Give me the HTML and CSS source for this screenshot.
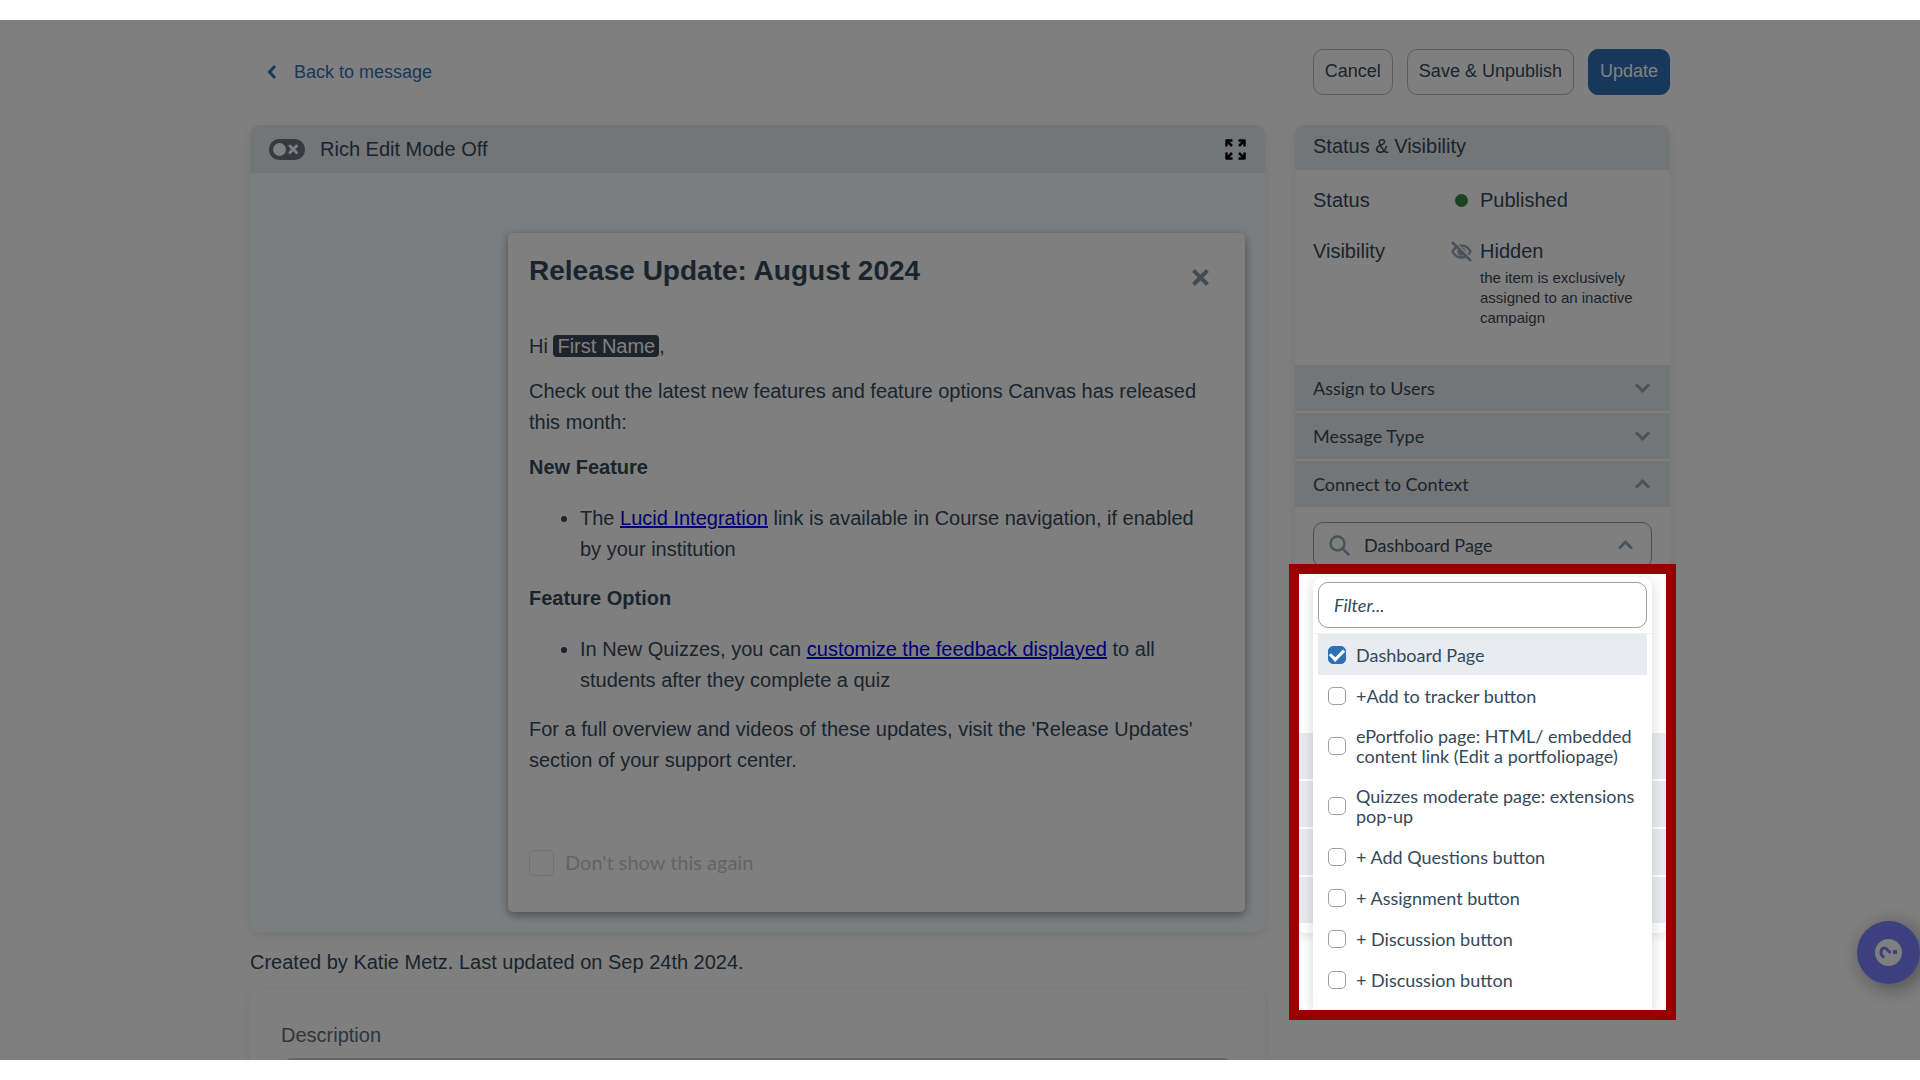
FILE: index.html
```html
<!DOCTYPE html>
<html lang="en">
<head>
  <meta charset="utf-8">
  <meta name="viewport" content="width=device-width, initial-scale=1">
  <title>Edit message</title>
  <link rel="stylesheet" href="styles.css">
</head>
<body>
  <div class="frame">
    <div class="page">
      <header class="topbar">
        <a class="back" href="#">
          <svg class="back-icon" viewBox="0 0 10 16" aria-hidden="true"><path d="M8 2 2.500 8 8 14"/></svg>
          Back to message
        </a>
        <div class="actions">
          <button class="btn" type="button">Cancel</button>
          <button class="btn" type="button">Save &amp; Unpublish</button>
          <button class="btn btn-primary" type="button">Update</button>
        </div>
      </header>

      <div class="columns">
        <main class="main">
          <section class="panel editor">
            <div class="editor-head">
              <label class="mode">
                <input class="toggle" type="checkbox" role="switch">
                <svg class="toggle-art" viewBox="0 0 36 21" aria-hidden="true">
                  <rect width="36" height="21" rx="10" fill="#6b7780"/>
                  <circle cx="10.500" cy="10.500" r="6.500" fill="#fff"/>
                  <path d="m21 7 6.500 6.500M27.500 7 21 13.500" stroke="#fff" stroke-width="3" stroke-linecap="round"/>
                </svg>
                Rich Edit Mode Off
              </label>
              <button class="icon-btn" type="button" aria-label="Full screen">
                <svg width="21" height="21" viewBox="0 0 21 21" fill="none" stroke="#000" stroke-width="2.500" stroke-linejoin="round" aria-hidden="true">
                  <path d="M1.500 7.500v-6h6M13.500 1.500h6v6M19.500 13.500v6h-6M7.500 19.500h-6v-6"/>
                  <path d="m2 2 5 5M19 2l-5 5M19 19l-5-5M2 19l5-5"/>
                </svg>
              </button>
            </div>
            <div class="editor-body">
              <article class="card">
                <div class="card-head">
                  <h1 class="card-title">Release Update: August 2024</h1>
                  <button class="icon-btn card-close" type="button" aria-label="Close">
                    <svg width="17" height="17" viewBox="0 0 17 17" aria-hidden="true"><path d="m1.500 1.500 14 14M15.500 1.500l-14 14" stroke="#8b969e" stroke-width="4"/></svg>
                  </button>
                </div>
                <p>Hi <span class="token">First Name</span>,</p>
                <p>Check out the latest new features and feature options Canvas has released this month:</p>
                <p><strong>New Feature</strong></p>
                <ul>
                  <li>The <a class="link" href="#">Lucid Integration</a> link is available in Course navigation, if enabled by your institution</li>
                </ul>
                <p><strong>Feature Option</strong></p>
                <ul>
                  <li>In New Quizzes, you can <a class="link" href="#">customize the feedback displayed</a> to all students after they complete a quiz</li>
                </ul>
                <p>For a full overview and videos of these updates, visit the 'Release Updates' section of your support center.</p>
                <label class="dismiss"><input class="check check-lg" type="checkbox" disabled>Don't show this again</label>
              </article>
            </div>
          </section>
          <p class="meta">Created by Katie Metz. Last updated on Sep 24th 2024.</p>
          <section class="panel details">
            <label class="field-label" for="description">Description</label>
            <textarea class="field" id="description"></textarea>
          </section>
        </main>

        <aside class="panel sidebar">
          <h2 class="side-head">Status &amp; Visibility</h2>
          <dl class="status">
            <dt>Status</dt>
            <dd class="status-value"><span class="status-mark"><span class="dot"></span></span>Published</dd>
            <dt>Visibility</dt>
            <dd class="status-value">
              <span class="status-mark">
                <svg width="21" height="21" viewBox="0 0 21 21" fill="none" stroke="#9aa3b3" stroke-width="2.500" aria-hidden="true">
                  <path d="M1.500 10.500C4 6 7 4.500 10.500 4.500s6.500 1.500 9 6c-2.500 4.500-5.500 6-9 6s-6.500-1.500-9-6Z"/>
                  <circle cx="10.500" cy="10.500" r="3" fill="#9aa3b3"/>
                  <path d="m2.500-.500 19 19" stroke="#fff" stroke-width="1.500"/>
                  <path d="m1 1 19 19"/>
                </svg>
              </span>
              Hidden
            </dd>
            <dd class="status-note">the item is exclusively assigned to an inactive campaign</dd>
          </dl>
          <div class="accordion">
            <button class="bar" type="button" aria-expanded="false">Assign to Users
              <svg class="chevron" viewBox="0 0 15 10" aria-hidden="true"><path d="m1 1.500 6.500 6.500L14 1.500"/></svg>
            </button>
            <button class="bar" type="button" aria-expanded="false">Message Type
              <svg class="chevron" viewBox="0 0 15 10" aria-hidden="true"><path d="m1 1.500 6.500 6.500L14 1.500"/></svg>
            </button>
            <button class="bar" type="button" aria-expanded="true">Connect to Context
              <svg class="chevron" viewBox="0 0 15 10" aria-hidden="true"><path d="M1 8.500 7.500 2 14 8.500"/></svg>
            </button>
          </div>
          <div class="context">
            <div class="combo">
              <button class="combo-btn" type="button" aria-haspopup="listbox" aria-expanded="true">
                <svg width="21" height="21" viewBox="0 0 21 21" fill="none" stroke="#9aa3b3" stroke-width="2.500" stroke-linecap="round" aria-hidden="true"><circle cx="8.500" cy="8.500" r="7"/><path d="m14 14 5.500 5.500"/></svg>
                <span class="combo-text">Dashboard Page</span>
                <svg class="chevron" viewBox="0 0 15 10" aria-hidden="true"><path d="M1 8.500 7.500 2 14 8.500"/></svg>
              </button>
              <div class="menu">
                <div class="menu-filter"><input class="filter" type="text" placeholder="Filter..." aria-label="Filter"></div>
                <div class="options">
                  <label class="option option-on"><input class="check" type="checkbox" checked>Dashboard Page</label>
                  <label class="option"><input class="check" type="checkbox">+Add to tracker button</label>
                  <label class="option"><input class="check" type="checkbox">ePortfolio page: HTML/ embedded content link (Edit a portfoliopage)</label>
                  <label class="option"><input class="check" type="checkbox">Quizzes moderate page: extensions pop-up</label>
                  <label class="option"><input class="check" type="checkbox">+ Add Questions button</label>
                  <label class="option"><input class="check" type="checkbox">+ Assignment button</label>
                  <label class="option"><input class="check" type="checkbox">+ Discussion button</label>
                  <label class="option"><input class="check" type="checkbox">+ Discussion button</label>
                </div>
                <div class="spotlight"></div>
              </div>
            </div>
          </div>
          <div class="accordion">
            <div class="bar"></div>
            <div class="bar"></div>
            <div class="bar"></div>
            <div class="bar"></div>
          </div>
        </aside>
      </div>
    </div>

    <button class="help" type="button" aria-label="Help">
      <svg width="27" height="27" viewBox="0 0 27 27" aria-hidden="true">
        <circle cx="13.500" cy="13.500" r="13.500" fill="#fff"/>
        <g transform="rotate(-90 13.500 13.500)">
          <path d="M9 9.500C9.500 7 11.200 6 13.500 6c2.600 0 4.500 1.400 4.500 3.700 0 3-4.300 2.900-4.300 6.300" fill="none" stroke="#7880fe" stroke-width="3"/>
          <rect x="12" y="18" width="4" height="4" fill="#7880fe"/>
        </g>
      </svg>
    </button>
  </div>
</body>
</html>
```
FILE: styles.css
```css
* { box-sizing: border-box; }

body {
  margin: 0;
  background: #fff;
  color: #35495a;
  font: 20px/31px "Liberation Sans", Arial, sans-serif;
}

button, input, textarea { font: inherit; color: inherit; }

/* the visible stage between the two white bands */
.frame {
  position: relative;
  height: calc(100vh - 40px);
  margin: 20px 0;
  overflow: hidden;
}

.page {
  width: calc(100% - 80px);
  max-width: 1420px;
  margin: 0 auto;
}

.topbar {
  display: flex;
  align-items: center;
  justify-content: space-between;
  padding: 29px 0 30px;
}

.back {
  display: flex;
  align-items: center;
  gap: 17px;
  padding-left: 17px;
  color: #2e71b5;
  font-size: 18px;
  line-height: 28px;
  text-decoration: none;
}

.back-icon {
  width: 10px;
  height: 16px;
  fill: none;
  stroke: currentColor;
  stroke-width: 3;
}

.actions { display: flex; gap: 14px; }

.btn {
  height: 46px;
  padding: 0 11px 2px;
  border: 1px solid #b4b9be;
  border-radius: 10px;
  background: #fff;
  font-size: 18px;
}

.btn-primary {
  border-color: #2e71b5;
  background: #2e71b5;
  color: #fff;
}

.columns {
  display: grid;
  grid-template-columns: minmax(0, 1fr) 375px;
  align-items: start;
  gap: 30px;
}

.panel {
  border-radius: 10px;
  background: #fff;
  box-shadow: 0 3px 10px rgba(45, 59, 69, 0.12);
}

/* editor */
.editor-head {
  display: flex;
  align-items: center;
  justify-content: space-between;
  height: 48px;
  padding: 0 19px;
  border-radius: 10px 10px 0 0;
  background: #e8ebef;
}

.mode { display: flex; align-items: center; gap: 15px; }

.toggle {
  position: absolute;
  opacity: 0;
}

.toggle-art { width: 36px; height: 21px; fill: none; }

.icon-btn {
  display: flex;
  padding: 0;
  border: 0;
  background: none;
}

.editor-body {
  padding: 60px 20px 20px;
  border-radius: 0 0 10px 10px;
  background: #f9fbfe;
}

.card {
  max-width: 737px;
  margin-left: auto;
  padding: 20px 21px 34px;
  border-radius: 5px;
  background: #fff;
  box-shadow: 0 3px 10px rgba(0, 0, 0, 0.4);
}

.card-head {
  display: flex;
  justify-content: space-between;
  margin-bottom: 43px;
}

.card-title {
  margin: 0;
  font-size: 28px;
  line-height: 35px;
}

.card-close { padding: 16px 15px 0 0; }

.card p { margin: 14px 0; }

.card ul { margin: 20px 0 18px; padding: 0 20px 0 51px; }

.token {
  padding: 0 4px;
  border-radius: 4px;
  background: #3a4858;
  color: #fff;
}

.link { color: #00e; }

.dismiss {
  display: flex;
  align-items: center;
  gap: 11px;
  margin-top: 71px;
  color: #c7c9cc;
  font-family: Lato, sans-serif;
}

.meta { margin: 15px 0 11px; }

.details { padding: 31px 35px 40px; }

.field-label { display: block; margin: 0 -4px 7px; color: #5c6c79; }

.field {
  display: block;
  width: 100%;
  height: 120px;
  border: 2px solid #c7cdd1;
  border-radius: 6px;
}

/* sidebar */
.sidebar { padding-bottom: 10px; }

.side-head {
  margin: 0;
  padding: 6px 18px 8px;
  border-radius: 10px 10px 0 0;
  background: #e8ebef;
  font-size: 20px;
  font-weight: 400;
}

.status {
  display: grid;
  grid-template-columns: 134px 1fr;
  row-gap: 20px;
  margin: 0;
  padding: 15px 18px 37px;
}

.status-value { display: flex; align-items: center; margin: 0; }

.status-mark {
  display: flex;
  justify-content: center;
  flex: none;
  width: 33px;
  padding-right: 4px;
}

.dot {
  width: 13px;
  height: 13px;
  border-radius: 50%;
  background: #38843f;
}

.status-note {
  grid-column: 2;
  margin: -19px 0 0 33px;
  font-size: 15px;
  line-height: 20px;
}

.accordion { display: grid; gap: 2px; }

.bar {
  display: flex;
  align-items: center;
  justify-content: space-between;
  width: 100%;
  height: 46px;
  padding: 0 20px 0 18px;
  border: 0;
  background: #e8ebef;
  font-family: Lato, sans-serif;
  font-size: 18px;
}

.chevron {
  width: 15px;
  height: 10px;
  fill: none;
  stroke: #9aa3b3;
  stroke-width: 3;
}

.context { height: 226px; padding: 15px 18px; }

.combo { position: relative; font-family: Lato, sans-serif; font-size: 18px; }

.combo-btn {
  display: flex;
  align-items: center;
  gap: 14px;
  width: 100%;
  height: 46px;
  padding: 0 18px 0 15px;
  border: 1px solid #98a0a6;
  border-radius: 10px;
  background: #fff;
}

.combo-text { flex: 1; text-align: left; }

.menu {
  position: absolute;
  z-index: 5;
  top: 55px;
  left: 0;
  right: 0;
  padding-bottom: 10px;
  border-radius: 10px 10px 0 0;
  background: #fff;
  box-shadow: 0 3px 14px rgba(45, 59, 69, 0.2);
}

.menu-filter {
  padding: 5px;
  border-bottom: 1px solid #eef0f2;
}

.filter {
  display: block;
  width: 100%;
  height: 46px;
  padding: 0 15px;
  border: 1px solid #98a0a6;
  border-radius: 10px;
  background: #fff;
}

.filter::placeholder { color: #35495a; font-style: italic; opacity: 1; }

.options { padding: 0 5px; }

.option {
  display: flex;
  align-items: center;
  gap: 10px;
  min-height: 41px;
  padding: 10px;
  line-height: 20px;
}

.option-on { background: #e8ebf0; }

.check {
  appearance: none;
  flex: none;
  width: 18px;
  height: 18px;
  margin: 0;
  border: 1px solid #98a0a6;
  border-radius: 5px;
  background: #fff;
}

.check:checked {
  display: grid;
  place-items: center;
  border-color: #2e71b5;
  background: #2e71b5;
}

.check:checked::before {
  content: "";
  width: 11px;
  height: 6px;
  margin-bottom: 3px;
  border: solid #fff;
  border-width: 0 0 3px 3px;
  transform: rotate(-45deg);
}

.check-lg { width: 25px; height: 26px; border-color: #e2e4e6; }

/* red outline round the open menu; its spread shadow dims the rest */
.spotlight {
  position: absolute;
  inset: -13px -24px -10px;
  border: 10px solid #900;
  box-shadow: 0 0 0 3000px rgba(0, 0, 0, 0.5);
  pointer-events: none;
}

.help {
  position: absolute;
  right: 0;
  bottom: 76px;
  display: grid;
  place-items: center;
  width: 63px;
  height: 63px;
  padding: 0;
  border: 0;
  border-radius: 50%;
  background: #7880fe;
  box-shadow: 4px 4px 20px rgba(0, 0, 0, 0.4);
}
```
